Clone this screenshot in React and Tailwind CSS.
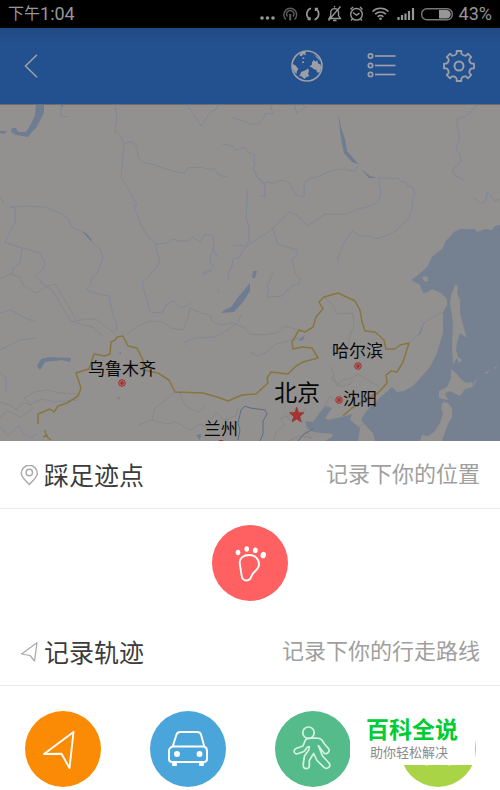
const RIVERS = [
    "115,104 117,117 115,132 118,133 121,137 124,144 123,155 121,178 128,188 133,198 137,203 134,207 138,217 142,227 149,238 156,244 157,252 160,262 156,268 152,272 148,277 142,283 144,290 148,303 149,309 152,313",
    "124,144 128,142 132,142 137,146 138,157 145,163 152,164 160,167 170,170 177,172 185,173 187,168 200,167 208,169 215,169 218,174 222,176 228,177",
    "185,104 190,108 192,113 197,119 201,126 207,117 210,113 217,108 218,104",
    "232,117 237,119 243,121 250,124 258,124 264,118 265,114 273,113 271,109 272,104",
    "294,104 297,114 305,107 302,104",
    "222,144 233,146 235,150 240,149 245,147 248,152 250,153 255,155 254,160 255,165 253,167 257,177 262,180 265,185 265,197 260,196",
    "257,177 262,183 268,182 272,184 276,182 283,180 290,183 292,189 297,195 304,197 304,182 311,178 317,177 328,172 340,169 355,171 358,166",
    "378,178 388,178 392,179 398,178 400,181 405,182 408,186 413,188 415,194 412,200 413,207 410,212 410,217 403,223 397,230 388,235 382,237 375,239 370,236 360,236 352,231 348,237 344,243 341,251 338,257 338,262",
    "378,178 381,192 380,198 377,203 367,207 357,209 347,214 325,214 318,219 308,226 303,221 297,215 290,212 285,215 282,220 273,228 267,233 260,237 250,244 243,250 240,257 233,259 232,266 229,272 228,279",
    "247,188 247,200 246,217 249,228 249,240 246,246 233,245",
    "273,228 277,243 283,246 290,248 298,250 297,255 292,259 295,273 300,279 299,284 293,285 287,290 282,296 267,297 269,290 267,287 273,273",
    "156,244 167,243 173,239 180,241 187,241 193,237 200,242 205,234 213,236 214,247 211,255 210,262 214,267 208,272 203,275",
    "213,248 215,254 219,257",
    "10,207 15,208 15,223 10,232 5,242 13,245 22,248 30,250 40,253 45,263 43,270 35,275 43,284 52,290 63,308 70,320 80,324 93,327 102,336",
    "22,248 20,263 13,268 12,275",
    "10,207 27,206 45,207 60,213 68,218 72,227 83,232 92,242 100,249 103,257 99,269 97,273 93,277 90,285 86,289 95,293 102,295 109,296 112,310 114,318 117,324 116,331",
    "478,104 470,113 465,116 457,119 457,126 459,133 459,140 456,149 460,155 461,162 452,170 456,176 465,181",
    "473,198 477,200 481,204 486,201 487,192 492,197 495,201 500,199",
    "0,197 4,203",
    "0,313 11,310 18,314 25,318 36,322",
    "0,350 14,343 20,340 36,338",
    "0,372 6,378 6,393",
    "33,403 42,399 55,402 78,400",
    "61,104 61,116 69,117",
    "152,313 163,312 166,305 173,301 182,308 191,303",
    "241,315 238,322 228,330 215,337 195,338 184,342 184,346",
    "202,274 208,270 212,272",
    "217,289 219,293",
    "250,352 258,356 266,352 276,344 300,338",
    "0,426 8,436 18,426 24,434 30,438 37,434",
];

const BORDERS = [
    "0,279 10,274 20,277 23,285 36,293 45,287 55,284 66,302 77,321 84,319 96,319 106,327 115,333",
    "128,333 138,326 150,321 163,322 171,328 183,330 188,318 190,308 201,313 210,315 212,321 220,325 233,323 245,328 250,334 262,335 277,333 285,326 299,330",
    "0,402 10,405 17,410 22,403 32,405 24,398 34,392 48,390 60,393 78,394",
    "0,417 8,411 20,417 28,413 34,407",
    "138,426 141,424 152,420 155,408 162,403 175,392 180,393 184,404 190,409 198,412 206,406",
    "152,420 166,424 176,422 190,430 200,424 210,430",
    "210,420 217,413 224,420 236,416 238,408",
    "273,441 276,432 285,425 280,418 289,416 295,408",
    "305,430 312,438 300,436 288,441",
    "325,298 332,304 337,314 353,313 354,326 350,335 348,345 344,353",
    "330,366 334,374 331,379 337,382 341,387 350,384 353,380",
    "333,376 337,386 342,380 352,378 358,374 366,379 378,386",
    "324,408 330,396 336,402",
    "356,428 364,424",
    "284,413 290,420 299,418 305,408",
];

const FRONTIER = [
    "38,424 38,414 50,409 54,412 58,406 67,403 78,396 81,388 76,373 89,369 94,354 105,356 110,354 111,342 115,340 117,337 123,336 128,346 137,348 143,360 143,370 158,373 169,380 175,392 203,393 217,397 228,401 242,395 256,394 268,383 267,378 271,372 288,374 296,366 303,362 318,358 312,348 302,347 293,349 292,342 299,330 305,332 313,327 316,317 323,309 319,302 324,297 338,293 355,301 360,310 362,322 365,331 375,332 384,340 386,349 395,349 400,345 409,343 403,362 397,372 391,371 386,375 387,383 378,393 372,396 360,403 352,408 343,416",
    "45,430 46,436 51,440",
    "43,437 48,435",
];

const INLAND_WATER = [
    "M36 104h8l0 9-8 15-5 5-3 4-6-1-6-1-5-3 1-4 4 0 2 4 8 0 5-8 4-9z",
    "M0 131l7 0-3 3-4-1z",
    "M61 104h3l-2 4z",
    "M253 271h4l-2 7h-3z",
    "M250 283v8l-7 11-9 10-13 1 2-2 8-4 8-11z",
    "M37 366l4-7 8-2 22 1-1 4-8-2-17 2-5 8z",
    "M338 113l3 14 4 12 2 12 7 8 4 5-6-2-8-9-3-14z",
    "M361 169l9 7 7 2-8 0z",
    "M83 232l8 9 1-1-6-7z",
    "M196 435l5-1-1 6z",
    "M300 339l5-4-2 5-4 1z",
    "M118 354l3-2 0 2zM117 397l4 1-3 1z",
    "M420 333l2-8-1 8-3 4z",
];

const CITIES = [
    { name: "乌鲁木齐", x: 88, y: 375, size: 17, dot: [122, 383] },
    { name: "哈尔滨", x: 332, y: 357, size: 17, dot: [358, 366] },
    { name: "沈阳", x: 343, y: 405, size: 17, dot: [339, 400] },
    { name: "兰州", x: 204, y: 435, size: 17 },
    { name: "北京", x: 274, y: 401, size: 23 },
];

const LAND = "#93918f";
const SEA = "#758090";

function MapView() {
    return (
        <svg viewBox="0 104 500 337" className="block w-full" role="img" aria-label="地图">
            <rect x="0" y="104" width="500" height="337" fill={LAND} />

            {/* Sea, with the islands laid on top */}
            <g fill={SEA}>
                <polygon points="500,225 495,226 492,230 485,229 477,232 475,229 460,229 454,232 445,242 443,248 432,257 427,267 418,275 411,280 420,285 423,293 428,292 432,289 441,293 447,299 447,305 443,312 443,333 437,353 430,367 422,376 413,386 404,391 397,392 392,387 383,395 372,405 365,413 361,420 367,427 373,433 375,441 500,441" />
                <polygon points="358,441 360,428 355,424 350,420 352,414 342,417 328,420 325,418 332,408 325,406 318,415 313,422 305,421 307,428 313,432 322,433 333,434 332,437 325,441" />
            </g>
            <g fill={LAND}>
                <polygon points="455,285 458,286 457,293 460,300 460,313 463,325 467,338 460,333 457,342 456,350 458,357 462,360 459,363 457,358 453,364 452,347 453,323 450,303 451,296" />
                <polygon points="451,369 457,374 460,378 466,383 472,382 473,387 465,389 460,396 450,391 445,393 448,400 439,398 439,391 447,387 451,378" />
                <polygon points="443,402 448,403 452,408 452,417 448,424 445,432 442,441 420,441 422,435 428,436 434,432 440,423 443,414 441,408" />
                <path d="M424 276l4 1 0 4-3 1-3-4zM473 384l4-6-3 8zM484 373l7-3-5 4zM494 368l4-3-3 4z" />
            </g>

            <g fill="none" strokeLinejoin="round">
                <g stroke="#858485" strokeWidth="0.8">
                    {BORDERS.map((points) => <polyline key={points} points={points} />)}
                </g>
                <g stroke="#7d8797" strokeWidth="0.9">
                    {RIVERS.map((points) => <polyline key={points} points={points} />)}
                    <polyline points="443,312 433,317 424,323 420,333 411,341" />
                </g>
                <g stroke="#877640" strokeWidth="1.5">
                    {FRONTIER.map((points) => <polyline key={points} points={points} />)}
                </g>
                <g stroke="#5d6c82">
                    <polyline points="238,440 240,430 238,423 241,410 245,406 250,408 258,409 265,410 267,414 263,421 263,434 260,441" />
                    <polyline points="298,441 304,434 313,429" />
                </g>
            </g>
            <g fill="#6f7c91">
                {INLAND_WATER.map((d) => <path key={d} d={d} />)}
            </g>

            {CITIES.map(({ name, x, y, size, dot }) => (
                <g key={name}>
                    {dot && (
                        <>
                            <circle cx={dot[0]} cy={dot[1]} r="3.3" fill="#a08080" stroke="#a0302c" />
                            <circle cx={dot[0]} cy={dot[1]} r="1.9" fill="#a8302c" />
                        </>
                    )}
                    <text x={x} y={y} fontSize={size} fill="#080808" fontFamily='"Noto Sans CJK SC", sans-serif'>
                        {name}
                    </text>
                </g>
            ))}
            <polygon
                points="296.7,407 298.6,412.5 304,412.7 299.8,416.4 301.3,422 296.7,418.9 292.1,422 293.6,416.4 289.4,412.7 294.8,412.5"
                fill="#a83430"
                stroke="#93302c"
                strokeWidth="0.6"
            />
            <path d="M218 441l2-1h2l2 1z" fill="#a0302c" />
            {/* Shadow below the header */}
            <rect x="0" y="104" width="500" height="1" fill="#6c6e72" />
        </svg>
    );
}

function StatusBar() {
    return (
        <div className="flex h-7 items-center justify-between bg-black px-2 text-[#979797]">
            <div className="flex items-center text-lg leading-7">
                <span className="text-base leading-7">下午</span>1:04
            </div>
            <div className="flex items-center gap-1.5">
                <svg width="195" height="20" viewBox="258 4 195 20" fill="none" stroke="currentColor" strokeWidth="1.4" aria-hidden="true">
                    {/* More */}
                    <g fill="currentColor" stroke="none">
                        <circle cx="262" cy="18" r="1.8" />
                        <circle cx="267.5" cy="18" r="1.8" />
                        <circle cx="273" cy="18" r="1.8" />
                    </g>
                    {/* Hotspot */}
                    <g stroke="#5c5c5c">
                        <path d="M286 19.5a6.4 6.4 0 1 1 8.5 0" />
                        <path d="M287.5 16.5a3.6 3.6 0 1 1 5.5 0" />
                        <path d="M290.2 14v6.5" strokeWidth="2" />
                    </g>
                    {/* Sync */}
                    <path d="M311 8.300a6 6 0 0 0-1.500 10.700M314.500 19.700a6 6 0 0 0 1.500-10.700" strokeWidth="1.7" />
                    <path d="M307.500 19.500h2.500v-2.500M318 8.500h-2.500v2.500" />
                    {/* Muted bell */}
                    <path d="M329 18.5h11.5l-2-3v-4a4 4 0 0 0-7.7 0v4zM334.5 7.5v-1.5M333 20.5h3.5M328.5 20.5l12-14" strokeWidth="1.3" />
                    {/* Alarm */}
                    <circle cx="356.5" cy="14.3" r="5.8" />
                    <path d="M353 12.5l3.5 2.7 3-2M350.5 9.5l2.5-2.5M362.5 9.5l-2.5-2.5M352.5 19l-1.5 1.5M360.5 19l1.5 1.5" />
                    {/* Wi-Fi */}
                    <path d="M372.5 11.5a11.5 11.5 0 0 1 16 0M375.2 14.2a7.5 7.5 0 0 1 10.6 0M377.7 16.8a4 4 0 0 1 5.6 0" strokeWidth="1.7" />
                    <circle cx="380.5" cy="18.8" r="1.3" fill="currentColor" stroke="none" />
                    {/* Signal */}
                    <path d="M398.5 20v-3M402 20v-5M405.5 20v-6.5M409 20v-9M413 20v-12" strokeWidth="2.2" />
                    {/* Battery */}
                    <rect x="421.7" y="8.7" width="30.6" height="11" rx="5" stroke="#777" />
                    <path d="M439 10h7.5a4 4 0 0 1 0 8.5H439z" fill="currentColor" stroke="none" />
                </svg>
                <span className="text-lg leading-7">43%</span>
            </div>
        </div>
    );
}

// Outline of the eight-toothed cog, around 16,16
function cogPath() {
    const at = (r, deg) => {
        const a = (deg * Math.PI) / 180;
        return `${(16 + r * Math.sin(a)).toFixed(2)} ${(16 - r * Math.cos(a)).toFixed(2)}`;
    };
    let d = "";
    for (let i = 0; i < 8; i++) {
        const a = i * 45;
        d += `${i ? "L" : "M"}${at(12.6, a - 11)}L${at(15.2, a - 9)}L${at(15.2, a + 9)}L${at(12.6, a + 11)}`;
        d += `Q${at(10.6, a + 22.5)} ${at(12.6, a + 34)}`;
    }
    return d + "Z";
}

function Header() {
    return (
        <header className="flex h-[76px] items-center justify-between bg-linear-to-b from-[#214a84] to-[#23508f] to-20% pl-5 pr-[25px] text-[#9b9fa6]">
            <button type="button" aria-label="返回" className="pb-px">
                <svg width="24" height="24" viewBox="0 0 24 24" fill="none" stroke="currentColor" strokeWidth="1.6">
                    <path d="M17 .7L5.5 12 17 23.3" />
                </svg>
            </button>
            <div className="flex items-center gap-11">
                <button type="button" aria-label="地图模式">
                    <svg width="32" height="32" viewBox="0 0 32 32" fill="currentColor">
                        <circle cx="16" cy="16" r="15" fill="none" stroke="currentColor" strokeWidth="1.6" />
                        <path d="M8.5 4l3.5-2.5 3 0-1 2.5-2 .5-1 1.5-2 0zM11.5 7.5h1.8v1.5h-1.8zM11 11.5h2v1.5h-2zM13 4.5l2-1-.5 2z" />
                        <path d="M1.5 14l2.5 1 3.5 4-1.5 2-.5 3-2-2-2-4z" />
                        <path d="M21 12.5l1.5-2.500 2 1.500 2-1 .5 3 2.500 1 1 3-2 5-2.500 0-.5-2.500-3-1-1.500-1.500-2.500-1 2.500-2z" />
                        <path d="M10 22l4-1.5 3-2 1 2.500-1 3 1.500 2-3 1-2 2-3-2.500-2.500-1 1.500-1.500z" />
                        <path d="M22 3.5l5 4 2.500 4-2.500-2.500z" />
                    </svg>
                </button>
                <button type="button" aria-label="列表">
                    <svg width="32" height="32" viewBox="0 0 32 32" fill="none" stroke="currentColor" strokeWidth="1.7">
                        {[6, 15.5, 24.5].map((y) => (
                            <g key={y}>
                                <circle cx="3.5" cy={y} r="2.2" />
                                <path d={`M8 ${y}H28.5`} />
                            </g>
                        ))}
                    </svg>
                </button>
                <button type="button" aria-label="设置">
                    <svg width="32" height="32" viewBox="0 0 32 32" fill="none" stroke="currentColor" strokeWidth="1.8" strokeLinejoin="round">
                        <path d={cogPath()} />
                        <circle cx="16" cy="16" r="4.5" strokeWidth="2" />
                    </svg>
                </button>
            </div>
        </header>
    );
}

function SectionTitle({ icon, title, hint }) {
    return (
        <div className="flex h-[68px] items-center justify-between border-b border-[#ebebeb] px-5">
            <h2 className="flex items-center gap-1 pt-1 text-[25px] leading-9 text-[#3c3c3c]">
                {icon}
                {title}
            </h2>
            <p className="text-[22px] leading-9 text-[#9f9f9f]">{hint}</p>
        </div>
    );
}

function RoundButton({ label, color, children }) {
    return (
        <button type="button" aria-label={label} className={`size-[76px] rounded-full ${color}`}>
            <svg viewBox="0 0 76 76" fill="none" stroke="#fff" strokeWidth="1.9" strokeLinejoin="round" strokeLinecap="round">
                {children}
            </svg>
        </button>
    );
}

export default function App() {
    return (
        <div className='flex min-h-screen flex-col bg-white font-[Roboto,"Noto_Sans_CJK_SC",sans-serif]'>
            <StatusBar />
            <Header />
            <MapView />

            <main className="relative pb-[3px]">
                <SectionTitle
                    title="踩足迹点"
                    hint="记录下你的位置"
                    icon={
                        <svg width="20" height="24" viewBox="0 0 20 24" fill="none" stroke="#a8a8a8" strokeWidth="1.4" aria-hidden="true">
                            <path d="M9.3 19.5C6 16 1.3 12.500 1.3 8.300a8 8 0 0 1 16 0c0 4.200-4.700 7.700-8 11.200z" />
                            <circle cx="9.3" cy="7.5" r="3.2" />
                        </svg>
                    }
                />
                <div className="flex justify-center pt-4 pb-[17px]">
                    <RoundButton label="踩足迹点" color="bg-[#ff6061]">
                        <g fill="#fff" stroke="none">
                            <ellipse cx="26" cy="27.5" rx="2.3" ry="2.8" />
                            <ellipse cx="34.7" cy="24" rx="2.3" ry="2.7" />
                            <ellipse cx="43.3" cy="25.2" rx="2.4" ry="2.8" />
                            <ellipse cx="51.3" cy="30" rx="2.7" ry="3.2" transform="rotate(15 51 30)" />
                        </g>
                        <path d="M37.3 30c-6 0-9.800 3-9.600 8l1.800 12c.5 4 2 5.500 5 5.500 2.800 0 4.200-1.800 5-4.500 1.200-4.500 7.500-6 7.500-11.500 0-5.700-4-9.500-9.700-9.500z" />
                    </RoundButton>
                </div>

                <SectionTitle
                    title="记录轨迹"
                    hint="记录下你的行走路线"
                    icon={
                        <svg width="20" height="24" viewBox="0 0 20 24" fill="none" stroke="#a8a8a8" strokeWidth="1.2" strokeLinejoin="round" aria-hidden="true">
                            <path d="M17 .8L1.5 12l8.500 1.500 4.500 5.500z" />
                        </svg>
                    }
                />
                <div className="grid grid-cols-4 justify-items-center pt-[25px]">
                    <RoundButton label="导航" color="bg-[#fb8b05]">
                        <path d="M48.5 21L19 43l17.500-.3L44.500 57z" />
                    </RoundButton>
                    <RoundButton label="驾车" color="bg-[#4aa6da]">
                        <path d="M23 34.500l3.500-11q.8-2.500 4-2.500h16.500q3.200 0 4 2.500l3 11" />
                        <path d="M23 35.500h31q3 1 3 4.500v8q0 3-3 3H22q-3 0-3-3v-8q0-3.500 4-4.500z" />
                        <g fill="#fff">
                            <circle cx="27" cy="43" r="2" />
                            <circle cx="49.5" cy="43" r="2" />
                            <path d="M23 51.500h3v2.500h-3zM50 51.500h3v2.500h-3z" />
                        </g>
                    </RoundButton>
                    <RoundButton label="步行" color="bg-[#56bb8a]">
                        <g stroke="#d5f2e3" strokeWidth="1.7">
                            <circle cx="33.5" cy="21.7" r="5.7" />
                            <path d="M36 27.200Q31.500 27.200 30.200 29.500L28 35l-6.500 2.300C18 38.500 18.500 43.500 22.500 42.700L29 40.500 32.500 36 34.300 35.500 33.800 39 29.500 45 28.300 52.500V55C28.500 58.500 34 58.500 34.300 55V49.500L38.700 42.500 42 49.500 49 56.300C52.500 59 56.500 55.500 54 52L47.500 45 43.300 34.500 48.800 41.800C51 44 55.200 41.500 53.800 38L49.500 33 46.500 28.600Q44.500 27.200 41.500 27z" />
                        </g>
                    </RoundButton>
                    <RoundButton label="骑行" color="bg-[#a8d445]">
                        <circle cx="26.5" cy="46" r="7.5" />
                        <circle cx="49.5" cy="46" r="7.5" />
                        <path d="M26.5 46l6-14h12l5 14M32.5 32l6 14 6-14" />
                    </RoundButton>
                </div>

                <div className="absolute right-[25px] bottom-[25px] w-[125px] bg-white pt-3 pb-0.5 pl-4">
                    <p className="text-[23px] leading-6 font-bold text-[#00cc33]">百科全说</p>
                    <p className="pl-1 text-[13px] leading-5 text-[#8a8a8a]">助你轻松解决</p>
                </div>
            </main>
        </div>
    );
}
